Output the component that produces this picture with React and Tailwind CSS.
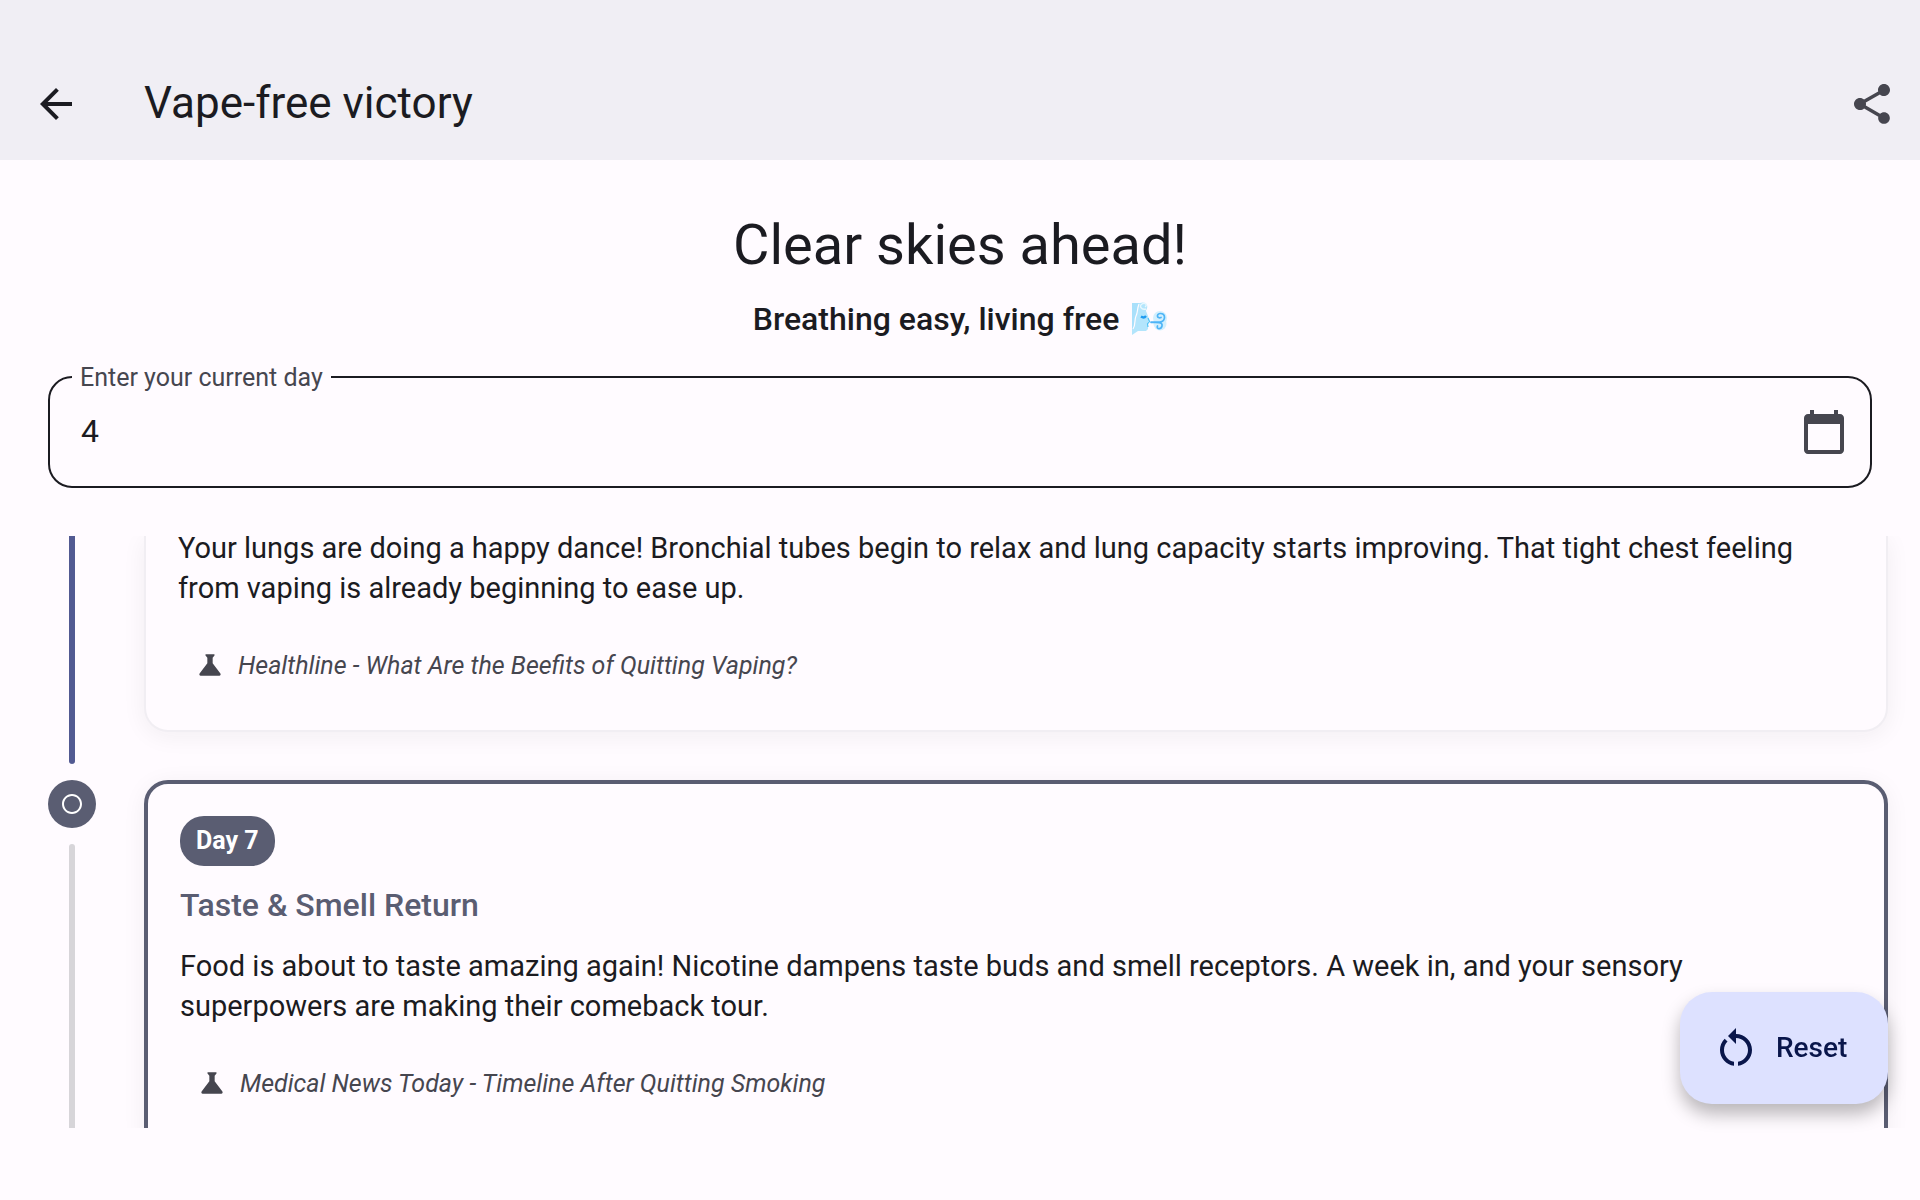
import React, { useState } from "react";
import {
  MdArrowBack,
  MdShare,
  MdCalendarToday,
  MdScience,
  MdRestartAlt,
  MdRadioButtonUnchecked,
} from "react-icons/md";

function WindFace() {
  return (
    <svg viewBox="0 0 36 34" className="h-[34px] w-9" fill="none" aria-hidden="true">
      <path d="M1 1H9C11 0 15 0 16 3C17 6 15 8 15 9L17 14L18 18L17 21V27L15 29H7L1 33Z" fill="#b3e5fc" />
      <circle cx="29" cy="16" r="7" fill="#d3effd" />
      <circle cx="29" cy="22" r="6.5" fill="#d3effd" />
      <path d="M1 1H8C6 6 7 10 5 14C3 18 5 23 1 27Z" fill="#a9e0fb" />
      <path d="M8 2C6 7 7 10 5 14C3 18 5 23 2 27" stroke="#fffbff" strokeWidth="1.2" />
      <path d="M15 7C10 8 8 4 11 2C14 0 17 3 14 5" stroke="#e8f7fe" strokeWidth="1.4" />
      <path d="M10 14.5Q13 16.5 15 14" stroke="#1e9bf0" strokeWidth="2.4" />
      <path d="M17 16L18.5 19.5L16.5 22L17 25" stroke="#4fc3f7" strokeWidth="1.2" />
      <path
        d="M20 20H29C35 19 35 11 29 11.5C25 12 26 17 30 15.5M20 20.5C26 20 32 20 31 24C30 28 25 27 26.5 24"
        stroke="#4db4f7"
        strokeWidth="1.7"
        strokeLinecap="round"
      />
    </svg>
  );
}

function Source({ children }) {
  return (
    <a href="#source" className="mt-6 flex items-center gap-3 p-4 text-[25px] leading-8 text-[#46464f] italic">
      <MdScience className="size-8 shrink-0" aria-hidden="true" />
      <span className="pt-0.5">{children}</span>
    </a>
  );
}

function Rail({ children }) {
  return <div className="flex w-12 shrink-0 flex-col items-center gap-4">{children}</div>;
}

export default function App() {
  const [day, setDay] = useState("4");

  return (
    <div className="flex h-screen flex-col bg-[#fffbff] font-['Roboto',sans-serif] text-[#1b1b21]">
      <header className="flex items-center bg-[#f0eef4] px-6 pt-12">
        <button type="button" aria-label="Back" className="flex h-28 w-16 items-center justify-center">
          <MdArrowBack className="size-12" />
        </button>
        <h1 className="ml-14 flex-1 pb-0.5 text-[44px] leading-[56px]">Vape-free victory</h1>
        <button type="button" aria-label="Share" className="text-[#46464f]">
          <MdShare className="size-12" />
        </button>
      </header>

      <section className="flex flex-col items-center px-12 pt-12">
        <h2 className="text-[56px] leading-[74px]">Clear skies ahead!</h2>
        <p className="mt-3 flex items-center gap-3 text-[32px] leading-[50px] font-medium">
          Breathing easy, living free
          <WindFace />
        </p>
        <div className="relative mt-8 flex h-28 w-full items-center rounded-3xl border-2 border-[#1b1b21] pr-[22px] pl-[31px]">
          <label
            htmlFor="day"
            className="absolute -top-[17px] left-[22px] bg-[#fffbff] px-2 text-[25px] leading-[34px] text-[#46464f]"
          >
            Enter your current day
          </label>
          <input
            id="day"
            value={day}
            onChange={(e) => setDay(e.target.value)}
            className="min-w-0 flex-1 bg-transparent pb-0.5 text-[32px] leading-[48px] outline-none"
          />
          <button type="button" aria-label="Pick a date" className="text-[#46464f]">
            <MdCalendarToday className="size-12" />
          </button>
        </div>
      </section>

      <main className="mt-12 mb-[72px] flex min-h-0 flex-1 flex-col gap-12 overflow-hidden pr-8 pl-12">
        <article className="flex shrink-0 gap-12">
          <Rail>
            <div className="-mb-8 w-1.5 flex-1 rounded-b-sm bg-[#525a92]" />
          </Rail>
          <div className="flex-1 rounded-b-3xl border-2 border-t-0 border-[#f1eef3] bg-[#fffbff] px-8 pb-8 shadow-[0_4px_24px_rgba(27,27,33,0.06)]">
            <p className="-mt-2 text-[29px] leading-10">
              Your lungs are doing a happy dance! Bronchial tubes begin to relax and lung capacity starts improving.
              That tight chest feeling from vaping is already beginning to ease up.
            </p>
            <Source>Healthline - What Are the Beefits of Quitting Vaping?</Source>
          </div>
        </article>

        <article className="flex shrink-0 gap-12">
          <Rail>
            <div className="flex size-12 items-center justify-center rounded-full bg-[#5a5d72] text-white">
              <MdRadioButtonUnchecked className="size-6" />
            </div>
            <div className="w-1.5 flex-1 rounded-t-sm bg-[#d7d5d9]" />
          </Rail>
          <div className="flex-1 rounded-3xl border-4 border-[#5a5d72] bg-[#fffbff] p-8 shadow-[0_4px_24px_rgba(27,27,33,0.06)]">
            <span className="inline-block rounded-3xl bg-[#5a5d72] px-4 py-2 align-top text-[25px] leading-[34px] font-bold text-white">
              Day 7
            </span>
            <h3 className="mt-4 text-[32px] leading-[46px] font-medium text-[#5a5d72]">Taste &amp; Smell Return</h3>
            <p className="mt-[18px] text-[29px] leading-10">
              Food is about to taste amazing again! Nicotine dampens taste buds and smell receptors. A week in, and your
              sensory superpowers are making their comeback tour.
            </p>
            <Source>Medical News Today - Timeline After Quitting Smoking</Source>
          </div>
        </article>
      </main>

      <button
        type="button"
        className="fixed right-8 bottom-24 flex h-28 min-w-52 items-center gap-4 rounded-[32px] bg-[#dde1ff] pr-10 pl-8 text-[28px] leading-10 font-medium text-[#09164b] shadow-[0_10px_18px_rgba(0,0,0,0.28)]"
      >
        <MdRestartAlt className="size-12" aria-hidden="true" />
        Reset
      </button>
    </div>
  );
}
